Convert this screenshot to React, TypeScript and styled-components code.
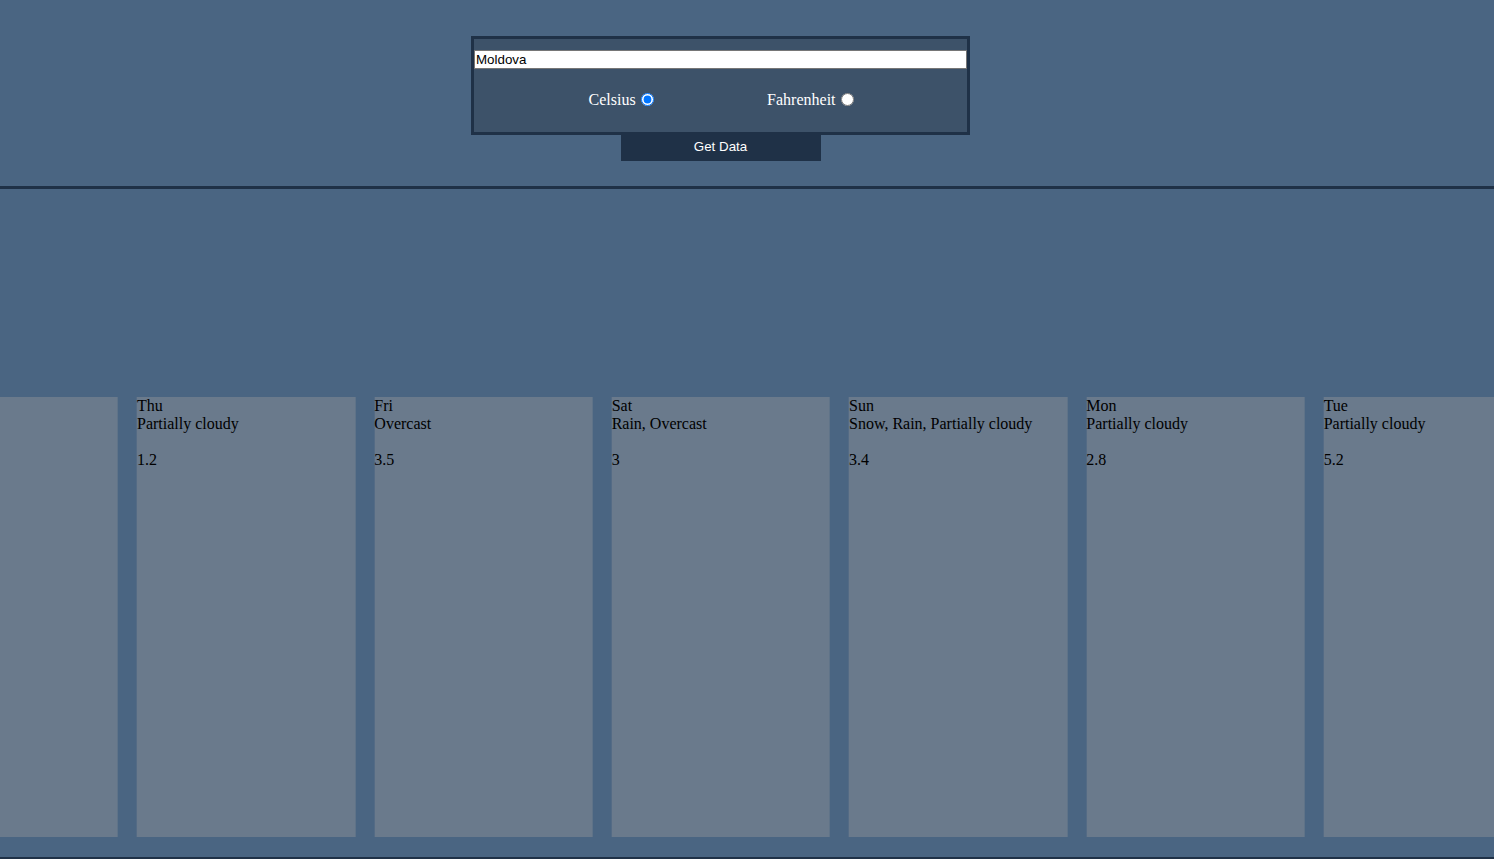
import { useState } from 'react';
import styled, { createGlobalStyle } from 'styled-components';

const GlobalStyle = createGlobalStyle`
	html, body {
		margin: 0;
		padding: 0;
		background: #4a6582;
		font-family: 'Liberation Serif', 'Times New Roman', serif;
		font-size: 16px;
		overflow: hidden;
	}
`;

const Header = styled.header`
	display: flex;
	flex-direction: column;
	align-items: center;
	padding: 36px 53px 24px 0;
	border-bottom: 3px solid #1f3147;
`;

const SearchBox = styled.div`
	width: 493px;
	border: 3px solid #1f3147;
	background: #3d5269;
	padding-top: 11px;
	display: flex;
	flex-direction: column;
`;

const CityInput = styled.input`
	box-sizing: border-box;
	width: 100%;
	height: 19px;
	margin: 0;
	padding: 1px;
	border: 1px solid #767676;
	background: #fff;
	color: #000;
	font-family: 'Liberation Sans', Arial, sans-serif;
	font-size: 13.33px;
	outline: none;
`;

const UnitRow = styled.div`
	box-sizing: border-box;
	height: 63px;
	padding: 0 0 2px 4px;
	display: flex;
	align-items: center;
	justify-content: space-evenly;
`;

const UnitLabel = styled.label`
	display: flex;
	align-items: center;
	color: #fff;
	font-size: 16px;
	line-height: 18px;

	input {
		margin: 0 3px 0 5px;
		width: 13px;
		height: 13px;
	}
`;

const GetButton = styled.button`
	width: 200px;
	height: 29px;
	margin: -3px 0 1px;
	padding: 0 0 1px;
	border: none;
	background: #1f3147;
	color: #fff;
	font-family: 'Liberation Sans', Arial, sans-serif;
	font-size: 13.33px;
	cursor: pointer;
`;

const Forecast = styled.section`
	padding: 208px 0 20px;
	border-bottom: 3px solid #1f3147;
	overflow: hidden;
`;

const Track = styled.div<{ offset: number }>`
	display: flex;
	gap: 19px;
	transform: translateX(${(props) => props.offset}px);
`;

const DayCard = styled.div`
	flex: 0 0 218.33px;
	height: 440px;
	background: #6a7a8c;
	color: #000;
	font-size: 16px;
	line-height: 18px;
`;

const Line = styled.div`
	min-height: 18px;
`;

type Day = { day: string; conditions: string; temp: string } | null;

// the first card is scrolled off the left edge, only its right part shows
const days: Day[] = [
	null,
	{ day: 'Thu', conditions: 'Partially cloudy', temp: '1.2' },
	{ day: 'Fri', conditions: 'Overcast', temp: '3.5' },
	{ day: 'Sat', conditions: 'Rain, Overcast', temp: '3' },
	{ day: 'Sun', conditions: 'Snow, Rain, Partially cloudy', temp: '3.4' },
	{ day: 'Mon', conditions: 'Partially cloudy', temp: '2.8' },
	{ day: 'Tue', conditions: 'Partially cloudy', temp: '5.2' },
];

export default function App() {
	const [city, setCity] = useState<string>('Moldova');
	const [unit, setUnit] = useState<string>('celsius');

	return (
		<>
			<GlobalStyle />
			<Header>
				<SearchBox>
					<CityInput value={city} onChange={(e) => setCity(e.target.value)} />
					<UnitRow>
						<UnitLabel>
							Celsius
							<input
								type="radio"
								name="unit"
								checked={unit === 'celsius'}
								onChange={() => setUnit('celsius')}
							/>
						</UnitLabel>
						<UnitLabel>
							Fahrenheit
							<input
								type="radio"
								name="unit"
								checked={unit === 'fahrenheit'}
								onChange={() => setUnit('fahrenheit')}
							/>
						</UnitLabel>
					</UnitRow>
				</SearchBox>
				<GetButton>Get Data</GetButton>
			</Header>
			<Forecast>
				<Track offset={-100.33}>
					{days.map((d, index) => (
						<DayCard key={index}>
							{d && (
								<>
									<Line>{d.day}</Line>
									<Line>{d.conditions}</Line>
									<Line />
									<Line>{d.temp}</Line>
								</>
							)}
						</DayCard>
					))}
				</Track>
			</Forecast>
		</>
	);
}
